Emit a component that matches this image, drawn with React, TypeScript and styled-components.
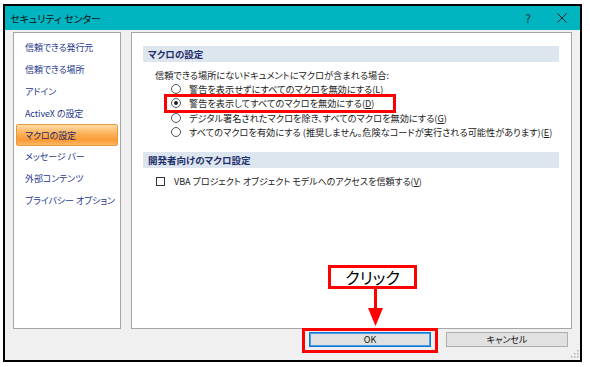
import React from 'react';
import styled, { createGlobalStyle, css } from 'styled-components';

const GlobalStyle = createGlobalStyle`
  body {
    margin: 0;
    background: #fff;
    font-family: "Noto Sans CJK JP", "Noto Sans", sans-serif;
    font-feature-settings: "palt" 1;
  }
`;

const Frame = styled.div`
  position: relative;
  box-sizing: border-box;
  margin: 4px 0 0 3px;
  width: 579px;
  height: 358px;
  border: 2px solid #000;
  background: #f0f0f0;
  display: flex;
  flex-direction: column;
`;

const TitleBar = styled.div`
  height: 24px;
  flex: none;
  background: #00b4c0;
  display: flex;
  align-items: center;
  padding-left: 5px;
  font-size: 10px;
  color: #111;
`;

const TitleText = styled.div`
  flex: 1;
`;

const TitleButton = styled.div`
  width: 34px;
  height: 24px;
  display: flex;
  align-items: center;
  justify-content: center;
  font-size: 11px;
  color: #222;
  &:last-child {
    margin-right: 1px;
  }
`;

const Main = styled.div`
  display: flex;
  gap: 10px;
  height: 297px;
  padding: 2px 8px 0 8px;
`;

const NavPanel = styled.div`
  width: 108px;
  box-sizing: border-box;
  background: #fff;
  border: 1px solid #a6a6a6;
  padding: 4px 0;
`;

const NavItem = styled.div<{ $active?: boolean }>`
  height: 21.8px;
  box-sizing: border-box;
  margin: 0 2px;
  padding-left: 8px;
  display: flex;
  align-items: center;
  font-size: 9px;
  letter-spacing: -0.1px;
  color: #26388c;
  border: 1px solid transparent;
  border-radius: 2px;
  white-space: nowrap;
  ${p =>
    p.$active &&
    css`
      color: #1f2a66;
      border-color: #e79a3e;
      background: linear-gradient(#ffdca8 0%, #fdb45e 40%, #fa9a34 75%, #fcb768 100%);
    `}
`;

const ContentPanel = styled.div`
  flex: 1;
  box-sizing: border-box;
  background: #fff;
  border: 1px solid #a6a6a6;
  padding: 13px 12px 0 11px;
`;

const SectionHeader = styled.div<{ $gap?: number }>`
  height: 16px;
  margin-top: ${p => p.$gap ?? 0}px;
  padding-left: 5px;
  display: flex;
  align-items: center;
  background: #dde5ee;
  font-size: 9.5px;
  font-weight: bold;
  color: #1d2e6c;
`;

const Group = styled.div`
  margin-top: 5.5px;
  padding-left: 12px;
  font-size: 9.2px;
  color: #222;
`;

const Line = styled.div`
  height: 14.3px;
  display: flex;
  align-items: center;
  white-space: nowrap;
`;

const RadioRow = styled(Line)<{ $highlight?: boolean }>`
  position: relative;
  padding-left: 16px;
  gap: 8px;
  ${p =>
    p.$highlight &&
    css`
      &::after {
        content: '';
        position: absolute;
        left: 9px;
        top: -2px;
        width: 232px;
        height: 19px;
        box-sizing: border-box;
        border: 3px solid #f00;
      }
    `}
`;

const Radio = styled.span<{ $checked?: boolean }>`
  width: 10px;
  height: 10px;
  flex: none;
  box-sizing: border-box;
  border-radius: 50%;
  border: 1px solid #555;
  background: #fff;
  display: flex;
  align-items: center;
  justify-content: center;
  &::before {
    content: '';
    width: 4px;
    height: 4px;
    border-radius: 50%;
    background: ${p => (p.$checked ? '#222' : 'transparent')};
  }
`;

const CheckRow = styled(Line)`
  margin-top: 6.4px;
  padding-left: 13px;
  gap: 9px;
  font-size: 9px;
  color: #222;
`;

const Checkbox = styled.span`
  width: 9px;
  height: 9px;
  flex: none;
  box-sizing: border-box;
  border: 1px solid #333;
  background: #fff;
`;

const Footer = styled.div`
  flex: 1;
  display: flex;
  justify-content: flex-end;
  align-items: flex-start;
  gap: 15px;
  padding: 3px 12px 0 0;
`;

const Button = styled.div<{ $primary?: boolean; $highlight?: boolean }>`
  position: relative;
  width: 122px;
  height: 15px;
  box-sizing: border-box;
  display: flex;
  align-items: center;
  justify-content: center;
  font-size: 9px;
  color: #111;
  background: #e1e1e1;
  border: 1px solid ${p => (p.$primary ? '#0a78d6' : '#adadad')};
  ${p =>
    p.$primary &&
    css`
      box-shadow: inset 0 0 0 1px #4c9be3;
    `}
  ${p =>
    p.$highlight &&
    css`
      &::after {
        content: '';
        position: absolute;
        left: -8px;
        right: -8px;
        top: -5px;
        bottom: -7px;
        border: 3px solid #f00;
      }
    `}
`;

const Callout = styled.div`
  position: absolute;
  left: 323px;
  top: 259px;
  width: 89px;
  display: flex;
  flex-direction: column;
`;

const CalloutLabel = styled.div`
  height: 24px;
  box-sizing: border-box;
  border: 3px solid #f00;
  background: #fff;
  display: flex;
  align-items: center;
  justify-content: center;
  font-size: 16px;
  color: #000;
`;

const Grip = styled.svg`
  position: absolute;
  right: 1px;
  bottom: 2px;
`;

const navItems = [
  '信頼できる発行元',
  '信頼できる場所',
  'アドイン',
  'ActiveX の設定',
  'マクロの設定',
  'メッセージ バー',
  '外部コンテンツ',
  'プライバシー オプション',
];

const radios = [
  { label: '警告を表示せずにすべてのマクロを無効にする', key: 'L' },
  { label: '警告を表示してすべてのマクロを無効にする', key: 'D', checked: true },
  { label: 'デジタル署名されたマクロを除き、すべてのマクロを無効にする', key: 'G' },
  { label: 'すべてのマクロを有効にする (推奨しません。危険なコードが実行される可能性があります)', key: 'E' },
];

const Access = styled.span`
  text-decoration: underline;
`;

export default function App() {
  return (
    <>
      <GlobalStyle />
      <Frame>
        <TitleBar>
          <TitleText>セキュリティ センター</TitleText>
          <TitleButton>?</TitleButton>
          <TitleButton>
            <svg width="10" height="10" viewBox="0 0 10 10">
              <path d="M0.5 0.5 L9.5 9.5 M9.5 0.5 L0.5 9.5" stroke="#222" strokeWidth="1" />
            </svg>
          </TitleButton>
        </TitleBar>
        <Main>
          <NavPanel>
            {navItems.map(item => (
              <NavItem key={item} $active={item === 'マクロの設定'}>
                {item}
              </NavItem>
            ))}
          </NavPanel>
          <ContentPanel>
            <SectionHeader>マクロの設定</SectionHeader>
            <Group>
              <Line>信頼できる場所にないドキュメントにマクロが含まれる場合:</Line>
              {radios.map(r => (
                <RadioRow key={r.key} $highlight={r.checked}>
                  <Radio $checked={r.checked} />
                  <span>
                    {r.label}(<Access>{r.key}</Access>)
                  </span>
                </RadioRow>
              ))}
            </Group>
            <SectionHeader $gap={12.8}>開発者向けのマクロ設定</SectionHeader>
            <CheckRow>
              <Checkbox />
              <span>
                VBA プロジェクト オブジェクト モデルへのアクセスを信頼する(<Access>V</Access>)
              </span>
            </CheckRow>
          </ContentPanel>
        </Main>
        <Footer>
          <Button $primary $highlight>
            OK
          </Button>
          <Button>キャンセル</Button>
        </Footer>
        <Callout>
          <CalloutLabel>クリック</CalloutLabel>
          <svg width="89" height="37" viewBox="0 0 89 37">
            <rect x="46" y="0" width="3" height="20" fill="#f00" />
            <polygon points="40,19 55,19 47.5,37" fill="#f00" />
          </svg>
        </Callout>
        <Grip width="8" height="8" viewBox="0 0 8 8">
          <g fill="#b0b0b0">
            <rect x="6" y="0" width="1.5" height="1.5" />
            <rect x="3" y="3" width="1.5" height="1.5" />
            <rect x="6" y="3" width="1.5" height="1.5" />
            <rect x="0" y="6" width="1.5" height="1.5" />
            <rect x="3" y="6" width="1.5" height="1.5" />
            <rect x="6" y="6" width="1.5" height="1.5" />
          </g>
        </Grip>
      </Frame>
    </>
  );
}
